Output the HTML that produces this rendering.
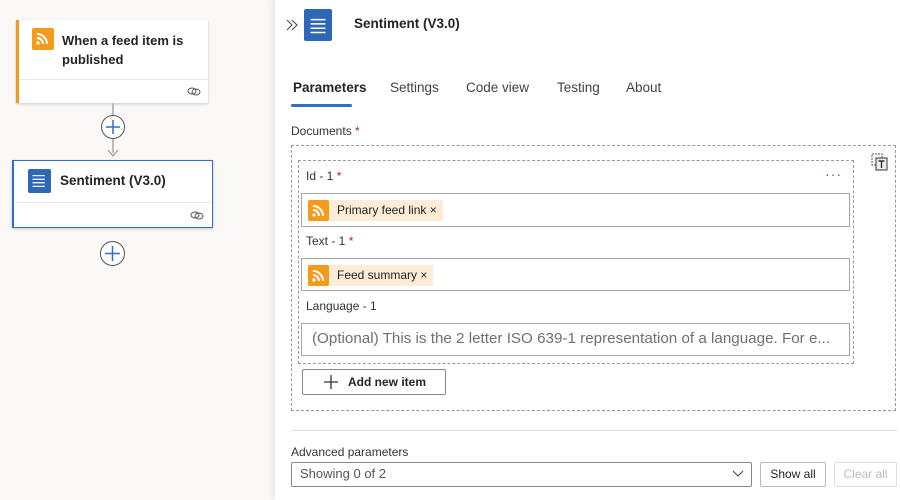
<!DOCTYPE html>
<html><head><meta charset="utf-8"><style>
*{box-sizing:border-box;margin:0;padding:0}
body{width:900px;height:500px;overflow:hidden;background:#faf9f8;font-family:"Segoe UI","Liberation Sans",sans-serif;color:#242424;position:relative}
.a{position:absolute}
.card{position:absolute;background:#fff;box-shadow:0 1px 3px rgba(0,0,0,.2)}
.rss{position:absolute;background:#f59b1c;border-radius:2px}
.tok{position:absolute;background:#fdecd6;height:21px;font-size:12px;line-height:21px;padding-left:29px;padding-right:6px}
.tok .rss{left:0;top:0;width:21px;height:21px}
.inp{position:absolute;border:1px solid #a8a8a8;background:#fff}
.lbl{position:absolute;font-size:12px;color:#333}
.req{color:#a4262c}
.tab{position:absolute;top:80px;font-size:13.5px;color:#424242}
</style></head><body>
<svg width="0" height="0" style="position:absolute"><defs>
<g id="r"><path d="M5 6a10 10 0 0 1 10 10M5 10a6 6 0 0 1 6 6" stroke="#fff" stroke-width="2" fill="none"/><circle cx="6" cy="15" r="1.6" fill="#fff"/></g>
<g id="lines"><path d="M6 8h14M6 12h14M6 16h14M6 20h14" stroke="#fff" stroke-width="1.4"/></g>
<g id="link"><ellipse cx="5" cy="6" rx="4" ry="3" stroke="#555" fill="none"/><ellipse cx="9" cy="7" rx="4" ry="3" stroke="#555" fill="none"/></g>
</defs></svg>

<!-- card 1 -->
<div class="card" style="left:16px;top:20px;width:192px;height:83px;border-left:3px solid #f59b1c"></div>
<div class="rss" style="left:32px;top:28px;width:22px;height:22px"><svg width="22" height="22"><use href="#r"/></svg></div>
<div class="a" style="left:62px;top:31px;font-size:13px;font-weight:600;line-height:19px;width:140px">When a feed item is published</div>
<div class="a" style="left:19px;top:79px;width:189px;height:1px;background:#e8e8e8"></div>
<svg class="a" style="left:187px;top:85px" width="16" height="12"><use href="#link"/></svg>
<div class="a" style="left:112px;top:103px;width:2px;height:50px;background:#bbb"></div>
<svg class="a" style="left:106px;top:148px" width="14" height="10"><path d="M2 2l5 6 5-6" stroke="#aaa" stroke-width="1.5" fill="none"/></svg>
<div class="a" style="left:101px;top:115px;width:24px;height:24px;border:1px solid #555;border-radius:50%;background:#fff"></div>
<svg class="a" style="left:101px;top:115px" width="24" height="24"><path d="M12 5v14M5 12h14" stroke="#2f6fc7" stroke-width="1.5"/></svg>

<!-- card 2 -->
<div class="card" style="left:12px;top:160px;width:201px;height:68px;border:1px solid #2f6fc7;border-left:2px solid #2f6fc7"></div>
<div class="a" style="left:28px;top:169px;width:23px;height:24px;background:#2e67b6;border-radius:2px"><svg width="23" height="24" viewBox="1 1 26 26"><use href="#lines"/></svg></div>
<div class="a" style="left:60px;top:173px;font-size:13.5px;font-weight:600">Sentiment (V3.0)</div>
<div class="a" style="left:15px;top:202px;width:196px;height:1px;background:#e8e8e8"></div>
<svg class="a" style="left:190px;top:209px" width="16" height="12"><use href="#link"/></svg>
<div class="a" style="left:100px;top:241px;width:25px;height:25px;border:1px solid #555;border-radius:50%;background:#fff"></div>
<svg class="a" style="left:100px;top:241px" width="25" height="25"><path d="M12.5 5v15M5 12.5h15" stroke="#2f6fc7" stroke-width="1.5"/></svg>

<!-- right panel -->
<div class="a" style="left:275px;top:0;width:625px;height:500px;background:#fff;box-shadow:-3px 0 6px rgba(0,0,0,.08)"></div>
<svg class="a" style="left:285px;top:18px" width="14" height="14"><path d="M2 2l5 5-5 5M7 2l5 5-5 5" stroke="#444" fill="none"/></svg>
<div class="a" style="left:304px;top:9px;width:28px;height:32px;background:#2e67b6;border-radius:2px"><svg width="28" height="32" viewBox="0 -2 26 30"><use href="#lines"/></svg></div>
<div class="a" style="left:354px;top:16px;font-size:13.5px;font-weight:600">Sentiment (V3.0)</div>

<div class="tab" style="left:293px;font-weight:600;color:#242424">Parameters</div>
<div class="tab" style="left:390px">Settings</div>
<div class="tab" style="left:466px">Code view</div>
<div class="tab" style="left:557px">Testing</div>
<div class="tab" style="left:626px">About</div>
<div class="a" style="left:291px;top:104px;width:61px;height:3px;background:#2f6fc7;border-radius:2px"></div>

<div class="lbl" style="left:291px;top:124px">Documents <span class="req">*</span></div>
<div class="a" style="left:291px;top:145px;width:605px;height:266px;border:1px dashed #999"></div>
<svg class="a" style="left:870px;top:153px" width="18" height="18"><rect x="2" y="1" width="10" height="11" fill="none" stroke="#555" stroke-dasharray="2 1"/><rect x="6" y="5" width="11" height="12" fill="#eee" stroke="#333"/><path d="M8.5 8h6M11.5 8v7" stroke="#333" stroke-width="1.4"/></svg>
<div class="a" style="left:298px;top:160px;width:556px;height:204px;border:1px dashed #999"></div>
<div class="lbl" style="left:306px;top:169px">Id - 1 <span class="req">*</span></div>
<div class="a" style="left:825px;top:166px;color:#2f6fc7;font-size:14px;letter-spacing:1px">···</div>
<div class="inp" style="left:301px;top:193px;width:549px;height:34px"></div>
<div class="tok" style="left:308px;top:200px"><div class="rss"><svg width="21" height="21"><use href="#r"/></svg></div>Primary feed link ×</div>
<div class="lbl" style="left:306px;top:234px">Text - 1 <span class="req">*</span></div>
<div class="inp" style="left:301px;top:258px;width:549px;height:33px"></div>
<div class="tok" style="left:308px;top:265px"><div class="rss"><svg width="21" height="21"><use href="#r"/></svg></div>Feed summary ×</div>
<div class="lbl" style="left:306px;top:299px">Language - 1</div>
<div class="inp" style="left:301px;top:323px;width:549px;height:33px"></div>
<div class="a" style="left:312px;top:330px;font-size:15.2px;color:#707070;white-space:nowrap">(Optional) This is the 2 letter ISO 639-1 representation of a language. For e...</div>
<div class="a" style="left:302px;top:369px;width:144px;height:26px;border:1px solid #888;border-radius:2px"></div>
<svg class="a" style="left:322px;top:373px" width="18" height="18"><path d="M9 2v14M2 9h14" stroke="#333" stroke-width="1.3"/></svg>
<div class="a" style="left:348px;top:375px;font-size:12px;font-weight:600">Add new item</div>

<div class="a" style="left:291px;top:430px;width:606px;height:1px;background:#e0e0e0"></div>
<div class="lbl" style="left:291px;top:445px">Advanced parameters</div>
<div class="a" style="left:291px;top:462px;width:461px;height:25px;border:1px solid #888;border-radius:2px"></div>
<div class="a" style="left:300px;top:466px;font-size:13px;color:#555">Showing 0 of 2</div>
<svg class="a" style="left:732px;top:469px" width="12" height="10"><path d="M1 2l5 5 5-5" stroke="#444" fill="none"/></svg>
<div class="a" style="left:760px;top:462px;width:66px;height:25px;border:1px solid #bbb;border-radius:2px;font-size:12px;text-align:center;line-height:23px">Show all</div>
<div class="a" style="left:834px;top:462px;width:63px;height:25px;border:1px solid #e0e0e0;border-radius:2px;font-size:12px;text-align:center;line-height:23px;color:#bbb">Clear all</div>
</body></html>
